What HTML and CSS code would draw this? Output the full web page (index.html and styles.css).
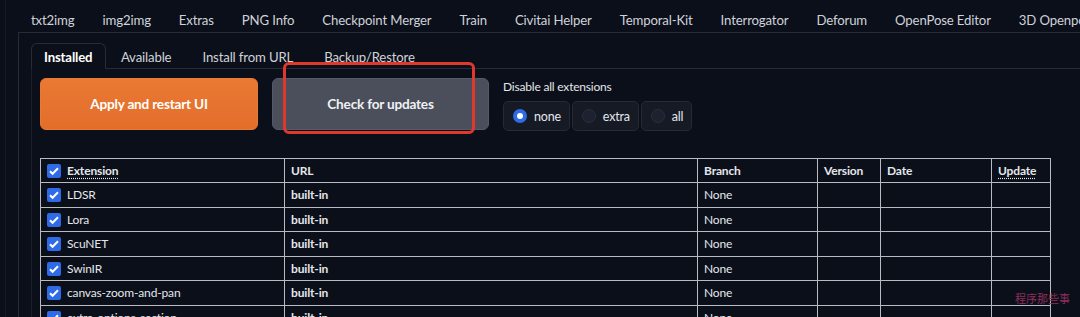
FILE: index.html
```html
<!DOCTYPE html>
<html lang="en">

<head>
    <meta charset="UTF-8">
    <title>Extensions</title>
    <link rel="stylesheet" href="styles.css">
</head>

<body>
    <div class="app">
        <div class="top-tabs">
            <button class="top-tab">txt2img</button>
            <button class="top-tab">img2img</button>
            <button class="top-tab">Extras</button>
            <button class="top-tab">PNG Info</button>
            <button class="top-tab">Checkpoint Merger</button>
            <button class="top-tab">Train</button>
            <button class="top-tab">Civitai Helper</button>
            <button class="top-tab">Temporal-Kit</button>
            <button class="top-tab">Interrogator</button>
            <button class="top-tab">Deforum</button>
            <button class="top-tab">OpenPose Editor</button>
            <button class="top-tab">3D Openpose</button>
        </div>

        <div class="panel">
            <div class="sub-tabs">
                <button class="sub-tab selected">Installed</button>
                <button class="sub-tab">Available</button>
                <button class="sub-tab">Install from URL</button>
                <button class="sub-tab">Backup/Restore</button>
            </div>

            <div class="sub-panel">
                <div class="actions">
                    <button class="btn btn-primary">Apply and restart UI</button>
                    <button class="btn btn-secondary">Check for updates</button>
                    <div class="disable-group">
                        <div class="disable-label">Disable all extensions</div>
                        <div class="radios">
                            <label class="radio checked"><span class="dot"></span>none</label>
                            <label class="radio"><span class="dot"></span>extra</label>
                            <label class="radio"><span class="dot"></span>all</label>
                        </div>
                    </div>
                </div>

                <table class="ext-table">
                    <colgroup>
                        <col style="width: 244px">
                        <col style="width: 413px">
                        <col style="width: 120px">
                        <col style="width: 63px">
                        <col style="width: 111px">
                        <col style="width: 59px">
                    </colgroup>
                    <thead>
                        <tr>
                            <th><span class="check"><svg viewBox="0 0 14 14"><path d="M3 7.2l2.6 2.6L11 4.3" /></svg></span><abbr>Extension</abbr></th>
                            <th>URL</th>
                            <th>Branch</th>
                            <th>Version</th>
                            <th>Date</th>
                            <th><abbr>Update</abbr></th>
                        </tr>
                    </thead>
                    <tbody id="rows"></tbody>
                </table>
            </div>
        </div>
    </div>

    <div class="highlight"></div>
    <div class="watermark">程序那些事</div>

    <script>
        const names = ['LDSR', 'Lora', 'ScuNET', 'SwinIR', 'canvas-zoom-and-pan', 'extra-options-section'];
        const tbody = document.getElementById('rows');

        names.forEach(name => {
            const tr = document.createElement('tr');
            tr.innerHTML = `
                <td><span class="check"><svg viewBox="0 0 14 14"><path d="M3 7.2l2.6 2.6L11 4.3" /></svg></span>${name}</td>
                <td class="url">built-in</td>
                <td>None</td>
                <td></td>
                <td></td>
                <td></td>`;
            tbody.appendChild(tr);
        });
    </script>
</body>

</html>
```

FILE: styles.css
```css
body {
    margin: 0;
    background-color: #0b0f19;
    color: #e4e6eb;
    font-family: Lato, 'Noto Sans', sans-serif;
    height: 317px;
    overflow: hidden;
}

button {
    font-family: inherit;
    cursor: pointer;
}

.app {
    margin-left: 5px;
    border-left: 1px solid #161a24;
    padding-left: 12px;
}

.top-tabs {
    display: flex;
    height: 32px;
    border-bottom: 1px solid #272b36;
    white-space: nowrap;
    overflow: hidden;
}

.top-tab {
    background: none;
    border: none;
    color: #cfd2d9;
    font-size: 13.2px;
    letter-spacing: -0.15px;
    padding: 8px 14px 0;
    height: 32px;
    flex-shrink: 0;
}

.top-tab:first-child {
    padding-left: 13px;
}

.panel {
    border-left: 1px solid #272b36;
    padding: 10px 0 0 12px;
}

.sub-tabs {
    display: flex;
    height: 25px;
    border-bottom: 1px solid #272b36;
}

.sub-tab {
    background: none;
    border: 1px solid transparent;
    border-bottom: none;
    color: #cfd2d9;
    font-size: 13.2px;
    letter-spacing: -0.15px;
    padding: 1px 14.5px 0;
    height: 26px;
    border-radius: 6px 6px 0 0;
}

.sub-tab.selected {
    border-color: #272b36;
    background-color: #0b0f19;
    color: #ffffff;
    font-weight: 700;
    padding: 1px 13px 0 12px;
    margin-right: -1px;
}

.sub-panel {
    border-left: 1px solid #1c202b;
    padding: 9px 0 0 8px;
}

.actions {
    display: flex;
    align-items: flex-start;
    gap: 14px;
}

.btn {
    width: 218px;
    height: 52px;
    border-radius: 6px;
    font-size: 13.6px;
    letter-spacing: -0.2px;
    font-weight: 700;
    color: #ffffff;
}

.btn-primary {
    background: linear-gradient(#ea7934, #e26e2a);
    border: 1px solid #ea7934;
}

.btn-secondary {
    width: 217px;
    background-color: #4b4f5b;
    border: 1px solid #565a66;
    color: #f0f1f4;
}

.disable-group {
    padding-top: 1px;
}

.disable-label {
    font-size: 12px;
    letter-spacing: -0.2px;
    color: #e4e6eb;
    height: 22px;
    line-height: 16px;
}

.radios {
    display: flex;
    gap: 2px;
}

.radio {
    display: flex;
    align-items: center;
    gap: 7px;
    height: 28px;
    padding: 0 8px 0 9px;
    background-color: #161a25;
    border: 1px solid #262a35;
    border-radius: 5px;
    font-size: 12.5px;
    letter-spacing: -0.2px;
    color: #e4e6eb;
}

.dot {
    width: 14px;
    height: 14px;
    border-radius: 50%;
    background-color: #1e2230;
    border: 1px solid #2a2e3a;
    box-sizing: border-box;
}

.radio.checked .dot {
    background-color: #ffffff;
    border: 4.5px solid #2f6be6;
}

.ext-table {
    margin-top: 27px;
    border-collapse: collapse;
    table-layout: fixed;
    width: 1010px;
    font-size: 12px;
    letter-spacing: -0.15px;
}

.ext-table th,
.ext-table td {
    border: 1px solid #b9bbc0;
    height: 24.5px;
    padding: 0 0 0 6px;
    text-align: left;
    white-space: nowrap;
    overflow: hidden;
    box-sizing: border-box;
}

.ext-table th {
    font-weight: 700;
    height: 24px;
}

.ext-table td.url {
    font-weight: 700;
}

abbr {
    text-decoration: underline dotted;
    text-underline-offset: 3px;
}

.check {
    display: inline-block;
    width: 14px;
    height: 14px;
    border-radius: 2px;
    background-color: #2f6be6;
    vertical-align: -3px;
    margin-right: 6px;
}

.check svg {
    width: 14px;
    height: 14px;
    display: block;
    fill: none;
    stroke: #ffffff;
    stroke-width: 2;
}

.highlight {
    position: absolute;
    left: 283px;
    top: 62px;
    width: 186px;
    height: 66px;
    border: 3px solid #e0382d;
    border-radius: 6px;
}

.watermark {
    position: absolute;
    left: 1015px;
    top: 290px;
    font-family: 'Noto Sans CJK SC', sans-serif;
    font-size: 11px;
    color: #8d2e5c;
}
```
